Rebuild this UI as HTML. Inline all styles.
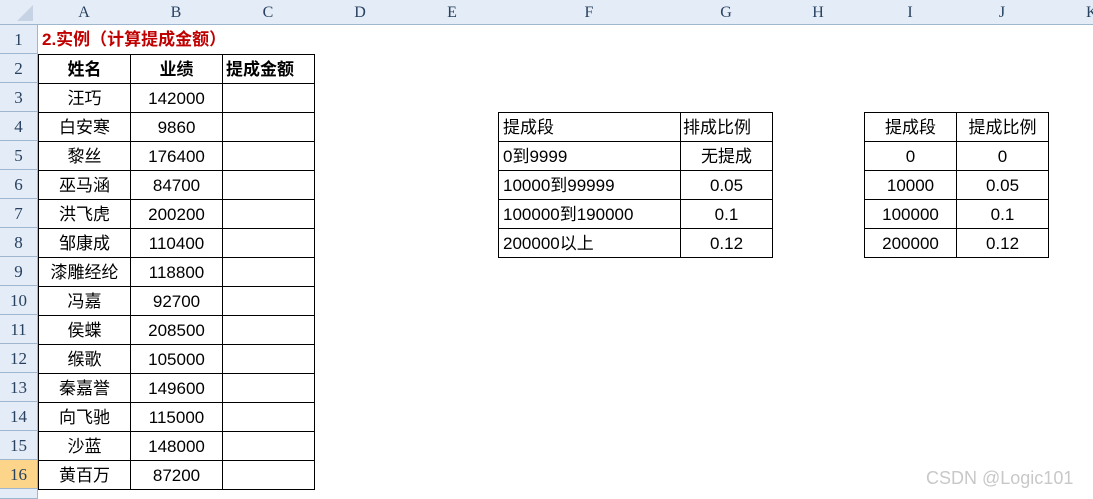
<!DOCTYPE html><html><head><meta charset="utf-8"><style>
body{margin:0;width:1093px;height:496px;background:#fff;overflow:hidden;position:relative;font-family:"Liberation Sans","Noto Sans CJK SC",sans-serif;}
.h{position:absolute;top:0;height:25px;background:#e4ecf7;border-right:1px solid #9eb6ce;border-bottom:1px solid #9eb6ce;box-sizing:border-box;text-align:center;line-height:26px;font-family:"Liberation Serif",serif;font-size:16px;color:#27415f}
.r{position:absolute;left:0;width:38px;height:29px;background:#e4ecf7;border-right:1px solid #9eb6ce;border-bottom:1px solid #9eb6ce;box-sizing:border-box;text-align:center;line-height:29px;font-family:"Liberation Serif",serif;font-size:17px;color:#27415f}
.c{position:absolute;height:30px;width:93px;border:1px solid #000;box-sizing:border-box;text-align:center;line-height:30px;font-size:17px;color:#000}
.l{text-align:left;padding-left:4px}
</style></head><body>
<div class="h" style="left:0;width:39px"><svg width="38" height="25" style="position:absolute;left:0;top:0"><polygon points="33,5 33,21 17,21" fill="#c5d3e4"/></svg></div>
<div class="h" style="left:38px;width:93px">A</div>
<div class="h" style="left:130px;width:93px">B</div>
<div class="h" style="left:222px;width:93px">C</div>
<div class="h" style="left:314px;width:93px">D</div>
<div class="h" style="left:406px;width:93px">E</div>
<div class="h" style="left:498px;width:183px">F</div>
<div class="h" style="left:680px;width:93px">G</div>
<div class="h" style="left:772px;width:93px">H</div>
<div class="h" style="left:864px;width:93px">I</div>
<div class="h" style="left:956px;width:93px">J</div>
<div class="h" style="left:1048px;width:60px;text-align:left;padding-left:38px">K</div>
<div class="r" style="top:25px">1</div><div class="r" style="top:54px">2</div><div class="r" style="top:83px">3</div><div class="r" style="top:112px">4</div><div class="r" style="top:141px">5</div><div class="r" style="top:170px">6</div><div class="r" style="top:199px">7</div><div class="r" style="top:228px">8</div><div class="r" style="top:257px">9</div><div class="r" style="top:286px">10</div><div class="r" style="top:315px">11</div><div class="r" style="top:344px">12</div><div class="r" style="top:373px">13</div><div class="r" style="top:402px">14</div><div class="r" style="top:431px">15</div><div class="r" style="top:460px;background:#fdd58a;border-right:1px solid #f0a030">16</div>
<div class="r" style="top:489px;height:10px"></div>
<div style="position:absolute;left:42px;top:25px;line-height:29px;font-weight:bold;color:#c00000;font-size:17px">2.实例（计算提成金额）</div>
<div id="t"></div>
<div style="position:absolute;left:926px;top:468px;font-size:18px;color:#c8c8c8">CSDN @Logic101</div>
<script>
var names=[["姓名","业绩",""],["汪巧","142000"],["白安寒","9860"],["黎丝","176400"],["巫马涵","84700"],["洪飞虎","200200"],["邹康成","110400"],["漆雕经纶","118800"],["冯嘉","92700"],["侯蝶","208500"],["缑歌","105000"],["秦嘉誉","149600"],["向飞驰","115000"],["沙蓝","148000"],["黄百万","87200"]];
var h="";
names.forEach(function(n,i){var t=54+29*i;var b=i==0?"font-weight:bold;":"";
h+='<div class="c" style="left:38px;top:'+t+'px;'+b+'">'+n[0]+'</div><div class="c" style="left:130px;top:'+t+'px;'+b+'">'+n[1]+'</div><div class="c" style="left:222px;top:'+t+'px;'+b+'text-align:left;padding-left:3px">'+(i==0?"提成金额":"")+'</div>';});
var f=[["提成段","排成比例"],["0到9999","无提成"],["10000到99999","0.05"],["100000到190000","0.1"],["200000以上","0.12"]];
f.forEach(function(n,i){var t=112+29*i;
h+='<div class="c l" style="left:498px;top:'+t+'px;width:183px">'+n[0]+'</div><div class="c" style="left:680px;top:'+t+'px;'+(i==0?'text-align:left;padding-left:2px':'')+'">'+n[1]+'</div>';});
var g=[["提成段","提成比例"],["0","0"],["10000","0.05"],["100000","0.1"],["200000","0.12"]];
g.forEach(function(n,i){var t=112+29*i;
h+='<div class="c" style="left:864px;top:'+t+'px">'+n[0]+'</div><div class="c" style="left:956px;top:'+t+'px">'+n[1]+'</div>';});
document.getElementById("t").innerHTML=h;
</script>
</body></html>
